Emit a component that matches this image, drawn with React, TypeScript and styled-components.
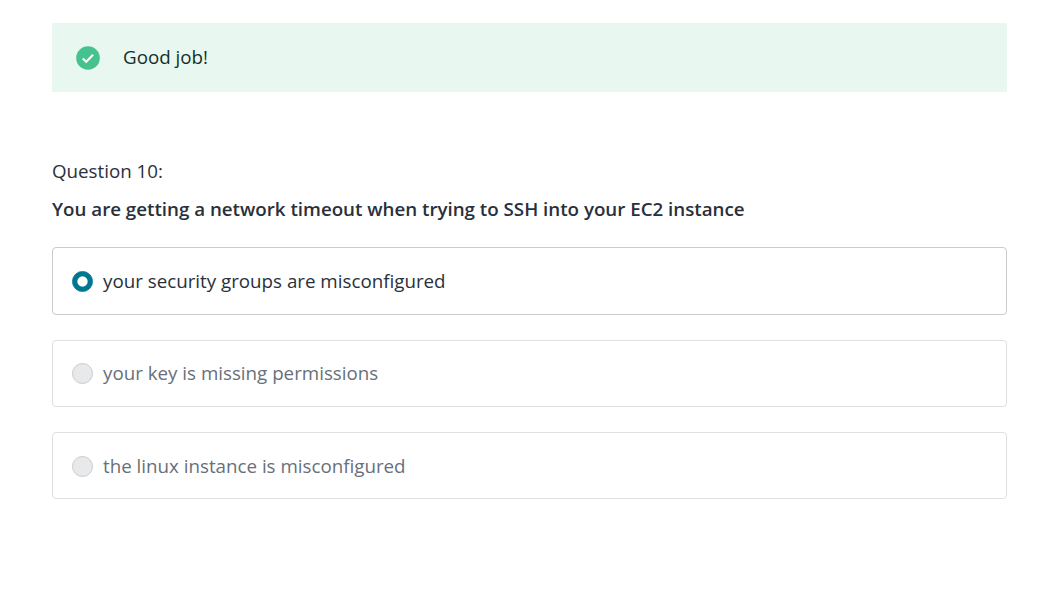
import React from "react";
import styled, { createGlobalStyle } from "styled-components";

const Global = createGlobalStyle`
  * { box-sizing: border-box; }
  body { margin: 0; background: #fff; color: #29303b; font-family: "Open Sans", sans-serif; font-size: 18.75px; line-height: 28px; }
`;
const Page = styled.main`padding: 23px 30px 0 52px;`;
const Banner = styled.div`
  display: flex; align-items: center; height: 69px; padding-left: 24px; gap: 23px;
  background: #e8f7f0; color: #14302b;
  svg { display: block; }
`;
const Message = styled.span`padding-bottom: 1px;`;
const Label = styled.div`margin-top: 65px;`;
const Title = styled.h1`
  margin: 10px 0 24.2px; font-size: inherit; font-weight: 600; letter-spacing: -0.012px;
`;
const List = styled.div`display: flex; flex-direction: column; gap: 25px;`;
const Option = styled.div<{ $on?: boolean }>`
  display: flex; align-items: center; gap: 10px; padding-left: 19px;
  height: 67.4px;
  border: 1px solid ${p => (p.$on ? "#cacbcc" : "#dedfe0")};
  border-radius: 4px; color: ${p => (p.$on ? "#29303b" : "#686f7a")};
`;
const Radio = styled.span<{ $on?: boolean }>`
  width: 21px; height: 21px; margin-top: 1px; border-radius: 50%;
  border: 1px solid ${p => (p.$on ? "#007791" : "#cacbcc")};
  background: ${p => (p.$on ? "radial-gradient(circle, #fff 4.6px, #007791 5.6px) border-box" : "#e8e9eb")};
`;

const options = [
  { text: "your security groups are misconfigured", on: true },
  { text: "your key is missing permissions" },
  { text: "the linux instance is misconfigured" },
];

export default function App() {
  return (
    <>
      <Global />
      <Page>
        <Banner>
          <svg width="24" height="24" viewBox="0 0 24 24">
            <circle cx="12" cy="12" r="11.8" fill="#46c28e" />
            <path d="M6.8 12.5l3.4 3.2 6.9-7" fill="none" stroke="#fff" strokeWidth="2.1" />
          </svg>
          <Message>Good job!</Message>
        </Banner>
        <Label>Question 10:</Label>
        <Title>You are getting a network timeout when trying to SSH into your EC2 instance</Title>
        <List>
          {options.map(o => (
            <Option key={o.text} $on={o.on}>
              <Radio $on={o.on} />
              <span>{o.text}</span>
            </Option>
          ))}
        </List>
      </Page>
    </>
  );
}
